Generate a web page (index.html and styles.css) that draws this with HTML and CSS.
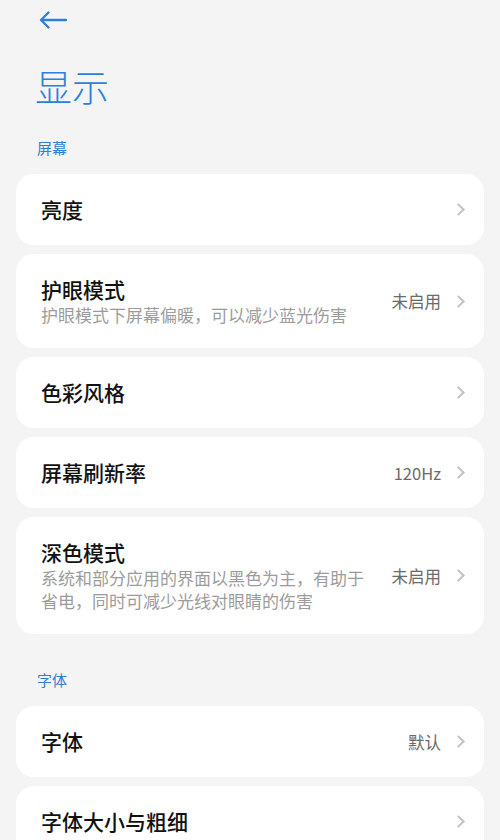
FILE: index.html
```html
<!DOCTYPE html>
<html lang="zh-CN">
<head>
<meta charset="utf-8">
<title>显示</title>
<link rel="stylesheet" href="styles.css">
</head>
<body>
<div class="page">
  <div class="topbar">
    <svg class="back" width="30" height="20" viewBox="0 0 30 20">
      <path d="M28 10 H3 M10.5 2.5 L3 10 L10.5 17.5" fill="none" stroke="#2f80d8" stroke-width="2.4" stroke-linecap="round" stroke-linejoin="round"/>
    </svg>
  </div>
  <h1 class="title">显示</h1>

  <div class="section">屏幕</div>
  <div class="list">
    <div class="card">
      <div class="main"><div class="name">亮度</div></div>
      <span class="chev"></span>
    </div>
    <div class="card">
      <div class="main">
        <div class="name">护眼模式</div>
        <div class="desc">护眼模式下屏幕偏暖，可以减少蓝光伤害</div>
      </div>
      <span class="value">未启用</span>
      <span class="chev"></span>
    </div>
    <div class="card">
      <div class="main"><div class="name">色彩风格</div></div>
      <span class="chev"></span>
    </div>
    <div class="card">
      <div class="main"><div class="name">屏幕刷新率</div></div>
      <span class="value">120Hz</span>
      <span class="chev"></span>
    </div>
    <div class="card">
      <div class="main">
        <div class="name">深色模式</div>
        <div class="desc">系统和部分应用的界面以黑色为主，有助于省电，同时可减少光线对眼睛的伤害</div>
      </div>
      <span class="value">未启用</span>
      <span class="chev"></span>
    </div>
  </div>

  <div class="section section-2">字体</div>
  <div class="list">
    <div class="card">
      <div class="main"><div class="name">字体</div></div>
      <span class="value">默认</span>
      <span class="chev"></span>
    </div>
    <div class="card">
      <div class="main"><div class="name">字体大小与粗细</div></div>
      <span class="chev"></span>
    </div>
  </div>
</div>
</body>
</html>
```

FILE: styles.css
```css
* { box-sizing: border-box; }
html, body {
  margin: 0;
  padding: 0;
  background: #f4f4f4;
}
body {
  font-family: "Noto Sans CJK SC", "Noto Sans", Roboto, sans-serif;
  color: #111;
}
.page {
  width: 500px;
  height: 840px;
  overflow: hidden;
}
.topbar {
  height: 40px;
  padding-left: 38px;
  display: flex;
  align-items: center;
}
.back { display: block; }
.title {
  margin: 18px 0 0 0;
  padding-left: 35px;
  height: 56px;
  line-height: 56px;
  font-size: 37px;
  font-weight: 300;
  color: #2f80d8;
}
.section {
  margin-top: 24px;
  padding-left: 37px;
  height: 20px;
  line-height: 20px;
  font-size: 15px;
  color: #2f80d8;
}
.section-2 { margin-top: 36px; }
.list {
  margin: 16px 16px 0 16px;
  display: flex;
  flex-direction: column;
  gap: 9px;
}
.card {
  background: #fff;
  border-radius: 18px;
  padding: 22px 18px 22px 25px;
  display: flex;
  align-items: center;
}
.main {
  flex: 1;
  min-width: 0;
}
.name {
  font-size: 21px;
  line-height: 27px;
  font-weight: 500;
  color: #111;
}
.desc {
  font-size: 17px;
  line-height: 23px;
  color: #9c9c9c;
  max-width: 330px;
}
.value {
  font-size: 16.5px;
  color: #6a6a6a;
  margin-left: 14px;
  white-space: nowrap;
}
.chev {
  width: 9px;
  height: 9px;
  border-top: 2px solid #c2c2c2;
  border-right: 2px solid #c2c2c2;
  transform: rotate(45deg);
  margin-left: 13px;
  margin-right: 3px;
  flex: none;
}
```
